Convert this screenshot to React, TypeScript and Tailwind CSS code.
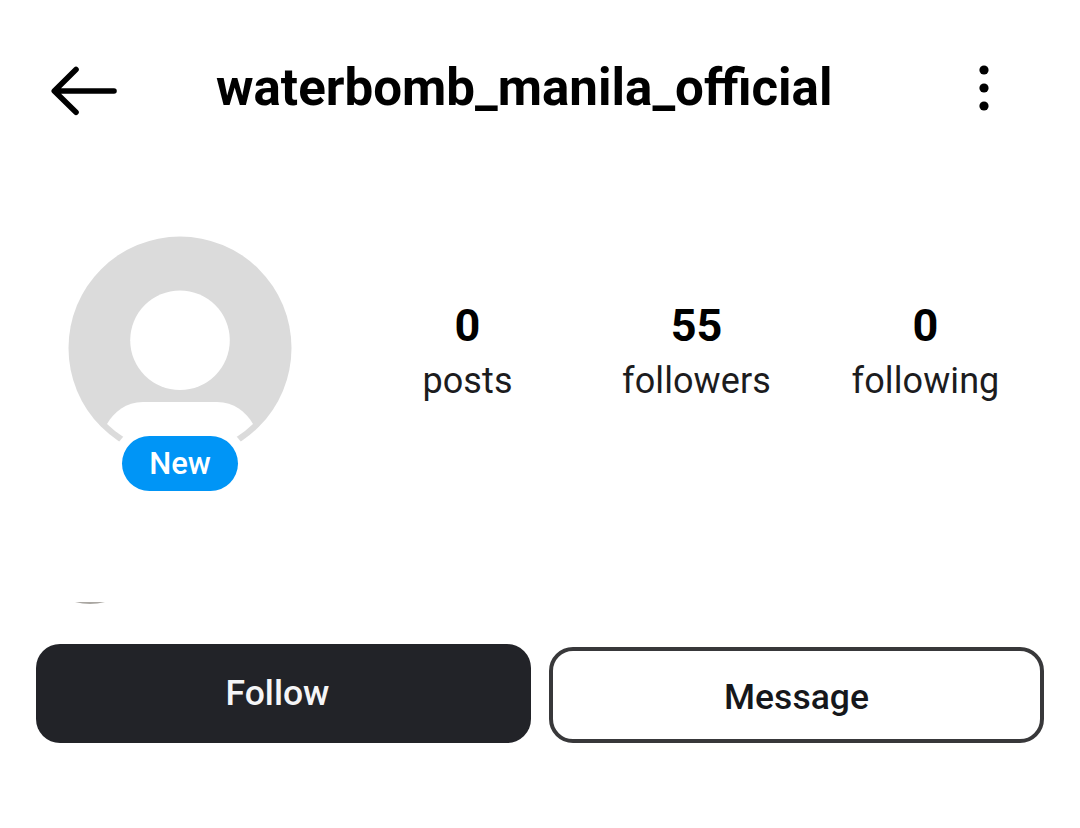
import { FC } from 'react'

type Stat = {
  value: string
  label: string
}

const stats: Stat[] = [
  { value: '0', label: 'posts' },
  { value: '55', label: 'followers' },
  { value: '0', label: 'following' },
]

const BackIcon: FC = () => (
  <svg width="68" height="52" viewBox="0 0 68 52" fill="none" stroke="#000" strokeWidth="5.6" strokeLinecap="round" strokeLinejoin="round">
    <path d="M26 5.5 L4.3 27 L26 48.3 M5 27 H64" />
  </svg>
)

const MoreIcon: FC = () => (
  <svg width="12" height="48" viewBox="0 0 12 48" fill="#000">
    <circle cx="6" cy="6" r="4.6" />
    <circle cx="6" cy="24" r="4.6" />
    <circle cx="6" cy="42" r="4.6" />
  </svg>
)

const Avatar: FC = () => (
  <div className="relative w-[224px] h-[224px]">
    <svg width="224" height="224" viewBox="0 0 224 224">
      <circle cx="112" cy="112" r="111.5" fill="#dbdbdb" />
      <circle cx="112" cy="104.3" r="49.8" fill="#fff" />
      <path d="M39 188 C46 176 58 166 75 166 H149 C166 166 178 176 185 188 A105 105 0 0 1 39 188 Z" fill="#fff" />
    </svg>
    <div className="absolute left-[44px] top-[190px] w-[136px] h-[75px] rounded-full bg-white p-[10px]">
      <div className="w-full h-full rounded-full bg-[#0095f6] text-white text-[31px] leading-[56px] font-medium text-center">New</div>
    </div>
  </div>
)

const App: FC = () => {
  return (
    <div className="w-[1080px] h-[828px] bg-white overflow-hidden font-['Roboto',sans-serif] text-black">
      <header className="flex items-center h-[178px] pb-[2px] pl-[50px] pr-[90px]">
        <div className="pt-[4px]">
          <BackIcon />
        </div>
        <h1 className="flex-1 pl-[98px] text-[51.1px] leading-[60px] font-bold whitespace-nowrap">waterbomb_manila_official</h1>
        <MoreIcon />
      </header>

      <section className="flex h-[424px] pt-[58px] pl-[68px]">
        <Avatar />
        <div className="grid grid-cols-3 w-[687px] h-fit ml-[61px] pt-[61px]">
          {stats.map((item) => (
            <div key={item.label} className="text-center">
              <div className="text-[45px] leading-[57px] font-bold">{item.value}</div>
              <div className="text-[36px] leading-[54px] tracking-[0.1px] text-[#1c1c1e]">{item.label}</div>
            </div>
          ))}
        </div>
      </section>

      {/* bottom edge of the mutual followers avatar */}
      <svg className="block ml-[74px]" width="32" height="3" viewBox="0 0 32 3">
        <path d="M1 0 H31 Q16 4 1 0 Z" fill="#aaa7a2" />
      </svg>

      <div className="flex items-end gap-[18px] pl-[36px] pt-[39px]">
        <button className="w-[495px] h-[99px] pr-[12px] pt-px rounded-[24px] bg-[#222328] text-[#f5f5f7] text-[35.5px] font-medium">Follow</button>
        <button className="w-[495px] h-[96px] pt-[6px] rounded-[24px] border-4 border-[#38383a] text-[#16171b] text-[35.5px] font-medium">Message</button>
      </div>
    </div>
  )
}

export default App
